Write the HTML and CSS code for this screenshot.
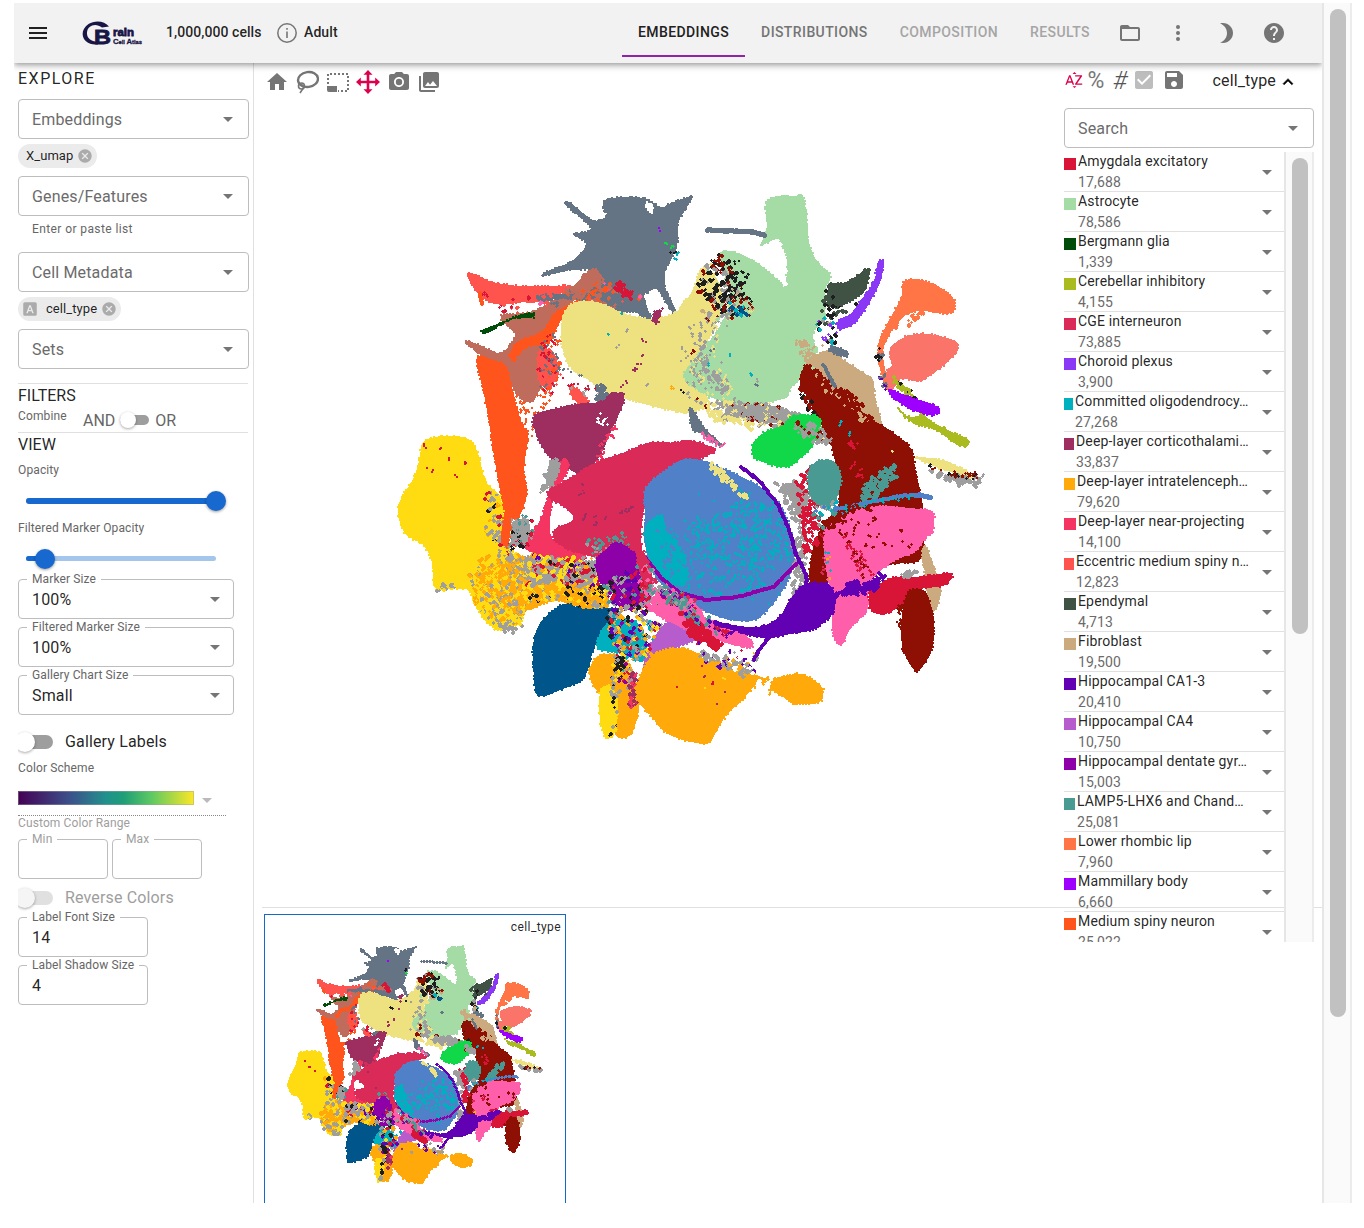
FILE: index.html
```html
<!DOCTYPE html>
<html lang="en">
<head>
<meta charset="utf-8">
<title>Brain Cell Atlas</title>
<link rel="stylesheet" href="styles.css">
</head>
<body>
<div class="app">
  <div class="page">
    <header class="topbar">
      <svg class="icon menu" viewBox="0 0 24 24"><path d="M3 18h18v-2H3v2zm0-5h18v-2H3v2zm0-7v2h18V6H3z"/></svg>
      <svg class="logo" viewBox="0 0 62 26" role="img" aria-label="Brain Cell Atlas">
        <path d="M27 6.500C23 1 13 -.3 6.500 4C-1.500 9.500 -1 19 6 22.800C9 24.300 12 24.500 16 24.500L16 21.800C9 22 4.500 18 5 12.500C5.500 5 14 2.500 20 7.500Z"/>
        <text class="logo-b" x="12" y="24.300" textLength="17" lengthAdjust="spacingAndGlyphs">B</text>
        <text class="logo-rain" x="31" y="15.800" textLength="21" lengthAdjust="spacingAndGlyphs">rain</text>
        <text class="logo-sub" x="31" y="23.800" textLength="29" lengthAdjust="spacingAndGlyphs"><tspan class="cap1">C</tspan>ell <tspan class="cap1">A</tspan>tlas</text>
      </svg>
      <div class="cells">1,000,000 cells</div>
      <svg class="icon info" viewBox="0 0 24 24"><circle cx="12" cy="12" r="9.200" fill="none" stroke="currentColor" stroke-width="1.500"/><path d="M11.200 7h1.600v1.800h-1.600zm0 3.600h1.600V17h-1.600z"/></svg>
      <div class="adult">Adult</div>
      <nav class="tabs">
        <a class="tab active">EMBEDDINGS</a><a class="tab">DISTRIBUTIONS</a><a class="tab off">COMPOSITION</a><a class="tab off">RESULTS</a>
      </nav>
      <div class="actions">
        <svg class="icon" viewBox="0 0 24 24"><path d="M20 6h-8l-2-2H4c-1.100 0-1.990.9-1.990 2L2 18c0 1.100.9 2 2 2h16c1.100 0 2-.9 2-2V8c0-1.100-.9-2-2-2zm0 12H4V8h16v10z"/></svg>
        <svg class="icon" viewBox="0 0 24 24"><circle cx="12" cy="6" r="2"/><circle cx="12" cy="12" r="2"/><circle cx="12" cy="18" r="2"/></svg>
        <svg class="icon" viewBox="0 0 24 24"><path d="M9 2c-1.050 0-2.050.16-3 .46 4.060 1.270 7 5.060 7 9.540 0 4.480-2.940 8.270-7 9.540.95.3 1.950.46 3 .46 5.520 0 10-4.480 10-10S14.520 2 9 2z"/></svg>
        <svg class="icon" viewBox="0 0 24 24"><path d="M12 2C6.480 2 2 6.480 2 12s4.480 10 10 10 10-4.480 10-10S17.520 2 12 2zm1 17h-2v-2h2v2zm2.070-7.750l-.9.920C13.450 12.900 13 13.500 13 15h-2v-.5c0-1.100.45-2.100 1.170-2.830l1.240-1.260c.37-.36.59-.86.59-1.410 0-1.100-.9-2-2-2s-2 .9-2 2H8c0-2.210 1.790-4 4-4s4 1.790 4 4c0 .88-.36 1.680-.93 2.250z"/></svg>
      </div>
    </header>
    <div class="content">
      <aside class="sidebar">
        <h2 class="explore">EXPLORE</h2>
        <div class="field">Embeddings<i class="arrow"></i></div>
        <div class="chips"><span class="chip">X_umap<svg class="x" viewBox="0 0 24 24"><path d="M12 2C6.470 2 2 6.470 2 12s4.470 10 10 10 10-4.470 10-10S17.530 2 12 2zm5 13.590L15.590 17 12 13.410 8.410 17 7 15.590 10.590 12 7 8.410 8.410 7 12 10.590 15.590 7 17 8.410 13.410 12 17 15.590z"/></svg></span></div>
        <div class="field">Genes/Features<i class="arrow"></i></div>
        <div class="helper">Enter or paste list</div>
        <div class="field">Cell Metadata<i class="arrow"></i></div>
        <div class="chips"><span class="chip"><svg class="a" viewBox="0 0 24 24"><path fill-rule="evenodd" d="M5 3h14a2 2 0 0 1 2 2v14a2 2 0 0 1-2 2H5a2 2 0 0 1-2-2V5a2 2 0 0 1 2-2zm6 4L7 17.500h2l.9-2.500h4.200l.9 2.500h2L13 7zm1 2l1.500 4.400h-3z"/></svg>cell_type<svg class="x" viewBox="0 0 24 24"><path d="M12 2C6.470 2 2 6.470 2 12s4.470 10 10 10 10-4.470 10-10S17.530 2 12 2zm5 13.590L15.590 17 12 13.410 8.410 17 7 15.590 10.590 12 7 8.410 8.410 7 12 10.590 15.590 7 17 8.410 13.410 12 17 15.590z"/></svg></span></div>
        <div class="field">Sets<i class="arrow"></i></div>
        <section class="filters">
          <h2>FILTERS</h2>
          <div class="combine"><span class="cap">Combine</span><span class="and">AND</span><span class="switch small"></span><span class="or">OR</span></div>
        </section>
        <section class="view">
          <h2>VIEW</h2>
          <div class="cap opacity">Opacity</div>
          <div class="slider first"><div class="rail"><div class="fill" style="width:100%"><b></b></div></div></div>
          <div class="cap marker">Filtered Marker Opacity</div>
          <div class="slider second"><div class="rail"><div class="fill" style="width:10%"><b></b></div></div></div>
          <fieldset class="box wide"><legend>Marker Size</legend>100%<i class="arrow"></i></fieldset>
          <fieldset class="box wide"><legend>Filtered Marker Size</legend>100%<i class="arrow"></i></fieldset>
          <fieldset class="box wide last"><legend>Gallery Chart Size</legend>Small<i class="arrow"></i></fieldset>
          <div class="toggle labels"><span class="switch"></span>Gallery Labels</div>
          <div class="cap scheme">Color Scheme</div>
          <div class="gradient-row"><div class="gradient"></div><i class="arrow"></i></div>
          <div class="cap range">Custom Color Range</div>
          <div class="minmax"><fieldset class="box dim"><legend>Min</legend></fieldset><fieldset class="box dim"><legend>Max</legend></fieldset></div>
          <div class="toggle reverse"><span class="switch disabled"></span>Reverse Colors</div>
          <fieldset class="box narrow"><legend>Label Font Size</legend>14</fieldset>
          <fieldset class="box narrow"><legend>Label Shadow Size</legend>4</fieldset>
        </section>
      </aside>
      <main class="main">
        <section class="chart">
          <div class="tools">
            <svg class="icon" viewBox="0 0 24 24"><path d="M10 20v-6h4v6h5v-8h3L12 3 2 12h3v8z"/></svg>
            <svg class="icon" viewBox="0 0 24 24"><g fill="none" stroke="currentColor"><ellipse cx="13" cy="9.500" rx="10" ry="7.500" stroke-width="2.400" transform="rotate(-8 13 9.500)"/><circle cx="6.500" cy="16" r="3" stroke-width="1.600"/><path d="M4 14c4 0 6 3 3 6l-2 3" stroke-width="1.600"/></g></svg>
            <svg class="icon" viewBox="0 0 24 24"><path d="M1 16h10v6H3a2 2 0 0 1-2-2z"/><path d="M2 14V4h20v17H12" fill="none" stroke="currentColor" stroke-width="2" stroke-dasharray="2 2"/></svg>
            <svg class="icon move" viewBox="0 0 24 24"><path d="M12 0l4.500 4.800h-3.200v5.900h5.900V7.500L24 12l-4.800 4.500v-3.200h-5.900v5.900h3.200L12 24l-4.500-4.800h3.200v-5.900H4.800v3.200L0 12l4.800-4.500v3.200h5.900V4.800H7.500z"/></svg>
            <svg class="icon" viewBox="0 0 24 24"><circle cx="12" cy="12" r="3.200"/><path d="M9 2L7.170 4H4c-1.100 0-2 .9-2 2v12c0 1.100.9 2 2 2h16c1.100 0 2-.9 2-2V6c0-1.100-.9-2-2-2h-3.170L15 2H9zm3 15c-2.760 0-5-2.240-5-5s2.240-5 5-5 5 2.240 5 5-2.240 5-5 5z"/></svg>
            <svg class="icon" viewBox="0 0 24 24"><path d="M22 16V4c0-1.100-.9-2-2-2H8c-1.100 0-2 .9-2 2v12c0 1.100.9 2 2 2h12c1.100 0 2-.9 2-2zm-11-4l2.030 2.710L16 11l4 5H8l3-4zM2 6v14c0 1.100.9 2 2 2h14v-2H4V6H2z"/></svg>
          </div>
          <canvas id="embedding" class="plot" width="640" height="600"></canvas>
        </section>
        <section class="gallery">
          <div class="tile"><span class="tile-title">cell_type</span><canvas id="thumb" class="thumb" width="300" height="268"></canvas></div>
        </section>
        <aside class="legend-panel">
          <div class="legend-tools">
            <svg class="az" viewBox="0 0 24 24"><path d="M14.940 4.660h-4.720l2.360-2.360zm-4.690 14.710h4.660l-2.330 2.330zM6.100 6.270L1.600 17.730h1.840l.92-2.450h5.110l.92 2.450h1.840L7.740 6.270H6.100zm-1.130 7.370l1.940-5.180 1.940 5.180H4.970zm10.760 2.500h6.120v1.590h-8.530v-1.290l5.920-8.560h-5.880v-1.600h8.300v1.260l-5.930 8.600z"/></svg>
            <span class="glyph pct">%</span><span class="glyph hash">#</span>
            <svg class="icon check" viewBox="0 0 24 24"><path d="M19 3H5c-1.110 0-2 .9-2 2v14c0 1.100.89 2 2 2h14c1.110 0 2-.9 2-2V5c0-1.100-.89-2-2-2zm-9 14l-5-5 1.410-1.410L10 14.170l7.590-7.590L19 8l-9 9z"/></svg>
            <svg class="icon save" viewBox="0 0 24 24"><path d="M17 3H5c-1.110 0-2 .9-2 2v14c0 1.100.89 2 2 2h14c1.100 0 2-.9 2-2V7l-4-4zm-5 16c-1.660 0-3-1.340-3-3s1.340-3 3-3 3 1.340 3 3-1.340 3-3 3zm3-10H5V5h10v4z"/></svg>
            <span class="legend-name">cell_type</span>
            <svg class="up" viewBox="0 0 24 24"><path d="M12 8l-6 6 1.410 1.410L12 10.830l4.590 4.580L18 14z" stroke="currentColor" stroke-width=".8"/></svg>
          </div>
          <div class="field search">Search<i class="arrow"></i></div>
          <div class="list-wrap">
            <ul class="list">
              <li><i class="sw" style="background:#d81437"></i><p>Amygdala excitatory<small>17,688</small></p><i class="arrow"></i></li>
              <li><i class="sw" style="background:#a5dca5"></i><p>Astrocyte<small>78,586</small></p><i class="arrow"></i></li>
              <li><i class="sw" style="background:#004d0a"></i><p>Bergmann glia<small>1,339</small></p><i class="arrow"></i></li>
              <li><i class="sw" style="background:#aabb20"></i><p>Cerebellar inhibitory<small>4,155</small></p><i class="arrow"></i></li>
              <li><i class="sw" style="background:#da2a58"></i><p>CGE interneuron<small>73,885</small></p><i class="arrow"></i></li>
              <li><i class="sw" style="background:#8a38f5"></i><p>Choroid plexus<small>3,900</small></p><i class="arrow"></i></li>
              <li><i class="sw" style="background:#00b0bf;width:9px"></i><p>Committed oligodendrocy…<small>27,268</small></p><i class="arrow"></i></li>
              <li><i class="sw" style="background:#9e2d60;width:10px"></i><p>Deep-layer corticothalami…<small>33,837</small></p><i class="arrow"></i></li>
              <li><i class="sw" style="background:#ffa90a;width:11px"></i><p>Deep-layer intratelenceph…<small>79,620</small></p><i class="arrow"></i></li>
              <li><i class="sw" style="background:#f53561"></i><p>Deep-layer near-projecting<small>14,100</small></p><i class="arrow"></i></li>
              <li><i class="sw" style="background:#ff544d;width:10px"></i><p>Eccentric medium spiny n…<small>12,823</small></p><i class="arrow"></i></li>
              <li><i class="sw" style="background:#3f5243"></i><p>Ependymal<small>4,713</small></p><i class="arrow"></i></li>
              <li><i class="sw" style="background:#ccaa80"></i><p>Fibroblast<small>19,500</small></p><i class="arrow"></i></li>
              <li><i class="sw" style="background:#6200b3"></i><p>Hippocampal CA1-3<small>20,410</small></p><i class="arrow"></i></li>
              <li><i class="sw" style="background:#b75ccc"></i><p>Hippocampal CA4<small>10,750</small></p><i class="arrow"></i></li>
              <li><i class="sw" style="background:#8e00a8"></i><p>Hippocampal dentate gyr…<small>15,003</small></p><i class="arrow"></i></li>
              <li><i class="sw" style="background:#489a92;width:11px"></i><p>LAMP5-LHX6 and Chand…<small>25,081</small></p><i class="arrow"></i></li>
              <li><i class="sw" style="background:#ff7546"></i><p>Lower rhombic lip<small>7,960</small></p><i class="arrow"></i></li>
              <li><i class="sw" style="background:#9e00ff"></i><p>Mammillary body<small>6,660</small></p><i class="arrow"></i></li>
              <li><i class="sw" style="background:#ff541c"></i><p>Medium spiny neuron<small>25,022</small></p><i class="arrow"></i></li>
            </ul>
            <div class="track"><div class="thumb-bar list-thumb"></div></div>
          </div>
        </aside>
      </main>
    </div>
  </div>
  <div class="track page-track"><div class="thumb-bar page-thumb"></div></div>
</div>
<script src="plot.js"></script>
</body>
</html>
```
FILE: styles.css
```css
* { box-sizing: border-box; }
body { margin: 0; background: #fff; color: rgba(0,0,0,.87); font: 16px/1.2 Roboto, "Liberation Sans", sans-serif; overflow: hidden; }
h2, p, ul { margin: 0; padding: 0; font-weight: 400; font-size: 16px; }
.app { display: flex; width: 1338px; height: 1200px; margin: 3px 0 0 14px; overflow: hidden; }
.page { width: 1308px; display: flex; flex-direction: column; }
.icon { width: 24px; height: 24px; fill: currentColor; color: #757575; flex: none; }
.arrow { width: 0; height: 0; border: 5px solid transparent; border-top-color: #757575; border-bottom: 0; flex: none; }

.topbar { height: 60px; flex: none; display: flex; align-items: center; background: #f2f2f2; position: relative; z-index: 2; box-shadow: 0 2px 4px -1px rgba(0,0,0,.2), 0 4px 5px rgba(0,0,0,.14), 0 1px 10px rgba(0,0,0,.12); font-size: 14px; font-weight: 500; clip-path: inset(0 0 -14px 0); }
.menu { margin-left: 12px; color: #212121; }
.logo { width: 62px; height: 26px; margin: 0 0 0 32px; fill: #191645; flex: none; }
.logo text { font-family: "Liberation Sans", sans-serif; font-weight: 700; stroke: #191645; stroke-width: .8; }
.logo-b { font-size: 20px; }
.logo-rain { font-size: 11px; }
.logo .logo-sub { font-size: 6px; stroke-width: .3; }
.cap1 { font-size: 8px; }
.cells { margin-left: 22px; width: 96px; padding-bottom: 2px; white-space: nowrap; letter-spacing: .06px; }
.info { margin-left: 13px; }
.adult { margin-left: 5px; width: 34px; padding-bottom: 2px; letter-spacing: .1px; }
.tabs { display: flex; height: 60px; margin-left: 284px; }
.tab { padding: 0 16px; height: 54px; line-height: 59px; color: #757575; letter-spacing: .4px; white-space: nowrap; }
.tab.active { color: #212121; border-bottom: 2px solid #8e24aa; }
.tab.off { color: #a5a5a5; }
.actions { display: flex; gap: 24px; margin-left: 12px; }

.content { display: flex; flex: 1; min-height: 0; }
.sidebar { width: 240px; border-right: 1px solid #e0e0e0; padding-left: 4px; flex: none; }
.sidebar h2 { line-height: 24px; height: 23px; }
.sidebar .explore { height: 36px; line-height: 31px; letter-spacing: 1.5px; }
.field { width: 231px; height: 40px; border: 1px solid #bdbdbd; border-radius: 4px; display: flex; align-items: center; justify-content: space-between; padding: 1px 15px 0 13px; color: #6b6b6b; letter-spacing: .16px; line-height: 20px; }
.field .arrow, .wide .arrow { margin-top: -1px; }
.chips { height: 37px; padding-top: 5px; }
.chip { display: inline-flex; align-items: center; height: 24px; border-radius: 12px; background: #ebebeb; padding: 0 4px 0 8px; font-size: 13px; letter-spacing: .07px; vertical-align: top; }
.chip svg { fill: #ababab; }
.x { width: 16px; height: 16px; margin-left: 4px; }
.a { width: 18px; height: 18px; margin: 0 7px 0 -5px; }
.helper { height: 36px; line-height: 26px; padding-left: 14px; font-size: 12px; letter-spacing: .4px; color: #666; }
.filters { margin: 14px 5px 0 0; border: solid #e0e0e0; border-width: 1px 0; height: 50px; }
.cap { font-size: 12px; letter-spacing: .12px; color: #666; }
.combine { display: flex; color: #666; height: 25px; line-height: 27px; }
.combine .cap { width: 65px; line-height: 18px; }
.combine .switch { margin: 6px 6px 0 5px; }
.switch { width: 34px; height: 14px; border-radius: 7px; background: #9e9e9e; position: relative; display: block; flex: none; }
.switch::before { content: ""; position: absolute; width: 20px; height: 20px; border-radius: 50%; background: #fff; left: -3px; top: -3px; box-shadow: 0 1px 3px rgba(0,0,0,.35); }
.switch.small { width: 29px; height: 10px; top: 2px; }
.switch.small::before { width: 16px; height: 16px; left: 0; top: -3px; }
.switch.disabled { background: #e0e0e0; }
.switch.disabled::before { background: #f5f5f5; }
.opacity { height: 28px; line-height: 28px; }
.marker { height: 20px; line-height: 20px; }
.slider { padding-left: 8px; }
.first { height: 34px; padding-top: 14px; }
.second { height: 41px; padding-top: 18px; }
.rail { width: 190px; height: 5px; border-radius: 3px; background: #a5c6ec; }
.fill { height: 6px; border-radius: 3px; background: #1769cf; position: relative; }
.second .fill { height: 5px; }
.fill b { position: absolute; right: -10px; top: -7px; width: 20px; height: 20px; border-radius: 50%; background: #1769cf; box-shadow: 0 1px 3px rgba(0,0,0,.4); }
.box { position: relative; margin: 0 0 8px; height: 40px; border: 1px solid #bdbdbd; border-radius: 4px; padding: 1px 13px 0; display: flex; justify-content: space-between; align-items: center; letter-spacing: .15px; min-width: 0; line-height: 20px; }
.box legend { position: absolute; left: 8px; top: -8px; padding: 0 5px; font-size: 12px; line-height: 14px; letter-spacing: .12px; color: #666; background: #fff; white-space: nowrap; }
.wide { width: 216px; }
.last { margin: 0; }
.narrow { width: 130px; }
.toggle { display: flex; align-items: center; gap: 12px; letter-spacing: .15px; height: 38px; overflow: hidden; }
.toggle .switch { width: 35px; }
.labels { margin-top: 6px; height: 42px; }
.reverse { color: #9e9e9e; }
.scheme { height: 28px; line-height: 10px; }
.gradient-row { display: flex; align-items: flex-start; width: 208px; height: 25px; border-bottom: 1px dotted #888; }
.gradient { width: 176px; height: 14px; border: 1px solid rgba(160,160,160,.45); background: linear-gradient(90deg,#440154,#3b528b 30%,#21918c 50%,#1f9e78 60%,#5ec962 76%,#fde725) border-box; }
.gradient-row .arrow { margin: 7px 0 0 8px; opacity: .5; }
.range { height: 23px; line-height: 15px; color: #9e9e9e; }
.minmax { display: flex; gap: 4px; height: 40px; }
.dim { width: 90px; }
.dim legend { color: #9e9e9e; }

.main { flex: 1; position: relative; display: flex; flex-direction: column; min-width: 0; }
.chart { height: 844px; flex: none; padding: 7px 0 0 11px; }
.tools { display: flex; gap: 6.400px; height: 24px; }
.tools .move { color: #dc004e; }
.plot { display: block; margin: 82px 0 0 115px; }
.gallery { border-top: 1px solid #e0e0e0; margin-left: 8px; padding: 6px 0 0 2px; flex: 1; min-height: 0; }
.tile { width: 302px; height: 310px; border: 1px solid #1769c6; display: flex; flex-direction: column; }
.tile-title { align-self: flex-end; font-size: 12px; line-height: 14px; padding: 5px 4px 0 0; letter-spacing: .4px; }
.thumb { display: block; }

.legend-panel { position: absolute; left: 810px; top: 0; width: 250px; }
.legend-tools { display: flex; height: 45px; padding-top: 5px; }
.az { width: 20px; height: 20px; margin-top: 2px; fill: #dc004e; flex: none; }
.glyph { width: 24px; font-size: 23px; line-height: 25px; font-weight: 400; color: #777; text-align: center; flex: none; }
.glyph.hash { font-size: 25px; font-weight: 300; font-style: italic; color: #555; }
.check { color: #bdbdbd; }
.save { margin-left: 6px; }
.legend-name { margin-left: 26.500px; line-height: 26px; letter-spacing: .15px; width: 65.500px; }
.up { width: 20px; height: 26px; color: #212121; padding-top: 2px; }
.search { width: 250px; }
.list-wrap { display: flex; height: 790px; margin-top: 4px; overflow: hidden; }
.list { width: 220px; list-style: none; }
.list li { display: flex; height: 40px; border-bottom: 1px solid #e0e0e0; }
.sw { width: 12px; height: 12px; margin: 6px 2px 0 0; flex: none; }
.list p { flex: 1; font-size: 14px; line-height: 19px; letter-spacing: .16px; white-space: nowrap; }
.list small { display: block; font-size: 14px; line-height: 23px; color: #6b6b6b; }
.list .arrow { margin: 18px 12px 0 0; }
.track { width: 30px; background: #fafafa; border-left: 2px solid #e6e6e6; border-right: 2px solid #ececec; flex: none; padding: 6px 0 0 6px; }
.thumb-bar { width: 16px; border-radius: 8px; background: #c1c1c1; }
.list-thumb { height: 476px; }
.page-thumb { height: 1008px; }
```
FILE: plot.js
```js
// UMAP scatter: solid cluster outlines, thin trajectories and mixed-cell regions.
const C = {
  slate: '#647485', coral: '#ff544d', brown: '#c06c5c', msn: '#ff541c', berg: '#004d0a',
  khaki: '#eee180', astro: '#a5dca5', epen: '#3f5243', chor: '#8a38f5', rhomb: '#ff7546',
  salmon: '#fa7469', mam: '#9e00ff', olive: '#aabb20', tan: '#ccaa80', dred: '#8e1005',
  crim: '#d81437', pink: '#ff5eaa', ca1: '#6200b3', dg: '#8e00a8', green: '#10d848',
  ct: '#9e2d60', cge: '#da2a58', near: '#f53561', blue: '#5080c8', cop: '#00b0bf',
  navy: '#00568a', yel: '#ffdb12', it: '#ffa90a', ca4: '#b75ccc', lamp: '#489a92',
  gray: '#9e9e9e', black: '#1e1e1e', white: '#ffffff'
};

// ['p', colour, outline] polygon; ['l', colour, width, line] trajectory;
// ['s', colours, count, size, outline] scattered markers inside an outline.
const LAYERS = [
  ['p', 'slate', '565,202 570,202 592,221 602,220 608,215 603,210 602,201 610,198 623,197 633,197 647,198 657,206 662,208 670,203 695,194 683,213 677,222 678,243 670,262 665,270 664,285 668,295 678,314 672,314 657,287 648,292 642,295 652,320 647,321 637,312 623,312 610,318 607,307 600,297 583,300 563,297 537,302 535,295 567,295 590,280 593,269 567,270 541,277 541,274 557,267 570,263 585,248 587,242 577,237 573,233 587,232 592,227 567,207'],
  ['p', 'white', '645,201 654,206 652,214 646,208'],
  ['p', 'coral', '466,274 473,273 490,282 523,287 570,285 570,290 537,303 523,302 500,305 490,303 477,294 469,281'],
  ['s', 'coral coral coral crim', 60, 4, '480,294 545,298 555,316 500,316'],
  ['l', 'msn', 3, '479,293 482,305'],
  ['p', 'brown', '498,314 533,313 570,290 592,266 604,277 590,290 563,307 550,337 540,353 540,387 533,401 523,402 512,388 503,367 480,355 464,341 470,342 500,356 518,335 505,325'],
  ['p', 'msn', '474,356 486,356 507,366 512,390 518,413 523,427 529,433 523,470 528,493 519,519 504,519 498,480 493,453 490,430 484,395'],
  ['p', 'brown', '464,342 470,341 502,355 510,362 485,358'],
  ['p', 'msn', '507,357 517,340 543,333 553,313 577,300 597,287 603,293 577,307 560,320 553,337 547,345 525,350 520,365'],
  ['s', 'msn', 190, 3, '515,385 540,340 560,340 550,400 535,440 523,430'],
  ['p', 'brown', '513,365 522,350 542,343 541,387 533,402 523,402 512,388'],
  ['p', 'coral', '537,348 554,350 559,372 550,391 537,382'],
  ['s', 'msn coral slate crim', 170, 3, '540,340 556,330 563,370 552,395 540,390'],
  ['p', 'slate', '535,295 570,294 605,293 640,297 640,306 608,302 585,300 560,298 537,302'],
  ['s', 'slate brown slate pink msn coral msn brown slate brown', 130, 4, '535,298 570,290 600,280 645,297 610,310 575,300 545,310'],
  ['s', 'brown', 60, 4, '565,295 590,270 604,278 600,290 575,298'],
  ['s', 'crim', 50, 4, '612,282 620,282 633,295 630,299 613,290'],
  ['p', 'berg', '480,330 503,322 523,313 535,313 534,318 513,318 490,331 483,334'],
  ['p', 'coral', '569,385 580,390 592,406 584,407 571,398'],
  ['p', 'khaki', '583,301 569,304 561,317 561,347 569,368 590,381 607,394 623,398 643,404 690,415 710,402 700,380 690,370 717,323 723,297 717,277 701,264 692,293 680,305 677,313 650,320 623,314 607,305 593,301'],
  ['s', 'slate gray crim', 45, 3, '550,360 570,370 610,390 610,400 585,400 555,375'],
  ['s', 'slate', 90, 4, '596,388 607,387 609,412 598,405'],
  ['p', 'astro', '766,200 780,195 797,196 803,194 807,217 808,243 817,263 832,274 823,293 825,320 813,330 813,340 818,353 803,377 790,388 788,398 760,404 730,404 700,394 681,377 692,360 713,337 725,317 733,300 725,280 718,251 734,251 757,262 778,280 785,290 788,257 777,237 758,248 767,230 765,210'],
  ['s', 'white', 35, 4, '768,242 784,240 786,285 776,272'],
  ['s', 'khaki gray khaki', 210, 3, '692,315 720,320 715,350 735,385 737,403 695,393 686,370'],
  ['s', 'gray khaki astro tan dred', 110, 4, '700,265 722,255 755,310 730,325 695,318'],
  ['s', 'black black black gray dred', 230, 4, '700,268 722,252 740,275 742,315 718,315 698,290'],
  ['s', 'black', 42, 3, '730,255 745,265 758,310 740,320 728,280'],
  ['s', 'tan dred', 25, 3, '730,280 755,290 755,318 730,310'],
  ['s', 'navy navy cop', 30, 4, '728,302 738,304 751,317 737,317'],
  ['s', 'gray gray khaki dred', 60, 3, '680,330 700,320 710,400 680,400'],
  ['s', 'gray', 55, 4, '697,330 704,330 707,362 728,390 722,397 701,370'],
  ['s', 'cop slate black gray it', 32, 3, '570,315 800,300 790,395 660,400'],
  ['s', 'ct', 60, 3, '653,312 660,309 658,323 654,323'],
  ['l', 'slate', 4, '707,230 730,231 754,232 766,236'],
  ['p', 'gray', '722,401 745,408 775,405 800,416 812,426 790,424 755,422 730,416'],
  ['s', 'gray gray gray gray khaki khaki gray dred', 480, 4, '690,396 730,402 765,403 790,410 835,430 828,443 800,432 770,425 730,422 700,405'],
  ['s', 'khaki', 100, 4, '690,402 730,416 768,423 755,430 715,420'],
  ['s', 'gray', 110, 4, '732,405 775,407 792,420 760,422 735,416'],
  ['p', 'slate', '688,405 694,411 703,428 724,446 720,448 702,433 691,431'],
  ['s', 'pink', 30, 3, '700,430 724,447 720,450 698,434'],
  ['p', 'epen', '828,283 847,283 869,266 870,272 865,293 847,303 836,309 826,305'],
  ['s', 'epen epen black', 60, 4, '822,285 830,280 840,310 850,310 862,293 858,315 835,315 825,330 820,300'],
  ['p', 'chor', '877,260 885,260 880,283 867,307 853,326 837,331 836,321 850,315 863,297 875,280'],
  ['s', 'black black tan cop gray chor', 50, 4, '815,323 830,315 840,340 822,350'],
  ['p', 'rhomb', '901,282 915,278 935,284 955,298 954,314 933,313 923,310 907,313 893,327 883,347 882,360 888,380 891,392 885,388 879,367 877,343 887,323 902,297'],
  ['s', 'rhomb', 28, 4, '895,325 908,312 930,313 910,327 890,337'],
  ['s', 'black slate', 14, 4, '873,342 879,345 887,388 881,384'],
  ['p', 'salmon', '890,346 907,335 927,333 959,341 956,354 937,371 918,383 900,377 891,393 884,373 893,365 889,353'],
  ['s', 'olive olive olive black', 60, 4, '893,376 900,383 917,399 910,398 897,387'],
  ['p', 'olive', '895,406 907,417 920,417 920,409 928,420 947,430 969,439 968,447 957,446 937,430 910,423'],
  ['p', 'mam', '886,388 913,398 938,406 940,413 930,416 910,410 891,397'],
  ['s', 'ca1 slate', 15, 3, '877,375 883,381 890,392 885,390'],
  ['p', 'tan', '813,357 827,349 853,366 874,380 874,397 884,430 860,413 837,393 820,377 808,367 797,342 807,340'],
  ['p', 'dred', '801,368 817,367 830,387 853,397 863,415 887,428 912,447 915,470 920,490 923,510 925,540 920,563 893,563 827,583 807,585 812,547 823,523 840,507 837,473 832,447 823,427 812,407 799,383'],
  ['s', 'dred dred tan', 170, 4, '805,362 825,380 860,397 878,426 855,415 820,388'],
  ['s', 'tan astro', 50, 3, '793,340 820,345 815,370 800,360'],
  ['s', 'black dred', 45, 4, '797,385 806,390 820,420 808,410'],
  ['p', 'slate', '827,350 833,345 848,352 847,358 835,354'],
  ['l', 'slate', 3, '823,365 830,378 835,387'],
  ['s', 'crim', 34, 3, '843,442 858,440 860,475 850,475'],
  ['s', 'yel khaki cop', 10, 3, '820,400 850,430 900,455 840,450'],
  ['p', 'khaki', '911,456 940,459 960,467 978,478 965,477 935,467'],
  ['s', 'gray', 110, 4, '930,471 950,476 981,477 982,484 960,483 940,478'],
  ['s', 'dred black dred', 50, 3, '925,464 950,473 978,472 980,479 960,479 940,475'],
  ['p', 'green', '751,443 765,431 783,426 793,414 819,415 821,427 813,447 788,469 767,464 752,458'],
  ['s', 'gray dred gray gray', 100, 4, '790,420 820,427 833,440 828,446 800,433'],
  ['p', 'ct', '531,415 553,409 577,404 603,402 610,392 624,393 624,403 610,433 600,457 582,477 567,468 547,456 536,437'],
  ['s', 'white ct', 30, 3, '596,415 611,407 607,427 598,423'],
  ['s', 'near', 50, 3, '610,427 616,425 597,468 590,466'],
  ['p', 'near', '547,497 563,455 571,465 552,498 548,537 563,547 590,557 570,564 537,555 521,547 523,537 540,523'],
  ['p', 'cge', '545,492 573,476 597,461 623,453 650,441 673,443 690,439 720,450 700,459 680,467 650,487 643,510 640,540 647,575 625,552 600,559 570,551 553,541 553,528 577,520 562,505 550,500'],
  ['s', 'ct cge', 50, 2, '575,465 583,465 585,510 580,520 650,500 590,530'],
  ['s', 'lamp', 40, 4, '585,540 622,532 627,546 595,552'],
  ['p', 'gray', '549,460 558,460 559,474 550,487 546,480'],
  ['s', 'gray', 60, 4, '548,461 558,461 560,478 545,495 540,490'],
  ['p', 'blue', '643,489 660,474 680,459 700,459 730,471 760,486 781,504 791,530 795,560 786,586 771,606 757,621 730,621 705,612 680,599 653,577 643,540 645,510'],
  ['p', 'cop', '643,525 662,512 666,530 685,550 688,588 668,583 647,557'],
  ['s', 'cop', 520, 3, '650,530 680,518 700,515 740,500 780,510 792,560 770,585 700,600 655,580'],
  ['s', 'cop', 330, 3, '690,530 750,495 785,520 790,555 740,570 710,560'],
  ['s', 'blue', 330, 3, '655,530 705,515 780,530 780,570 700,590 665,578'],
  ['s', 'cop', 60, 3, '685,480 780,500 785,600 750,615 690,598'],
  ['s', 'khaki', 75, 4, '706,463 720,467 750,500 735,495'],
  ['p', 'gray', '778,484 800,482 808,495 806,520 797,515 790,498'],
  ['s', 'gray', 300, 4, '775,485 795,480 808,495 806,540 802,585 791,600 797,525'],
  ['s', 'crim', 200, 4, '793,478 813,466 816,500 822,540 804,555 802,520'],
  ['p', 'lamp', '808,467 820,459 836,461 842,480 836,501 827,510 812,501 807,487'],
  ['s', 'lamp', 200, 4, '863,490 877,473 897,463 895,477 873,500 857,510'],
  ['s', 'lamp cop gray blue', 55, 4, '813,505 832,503 845,515 825,532 815,525'],
  ['l', 'blue', 3, '835,510 865,503 900,496 915,495'],
  ['s', 'cop', 30, 3, '845,506 912,493 912,498 845,510'],
  ['l', 'blue', 4, '915,495 921,495 931,498'],
  ['p', 'pink', '825,526 853,511 880,505 920,509 934,511 934,531 925,538 917,551 893,561 877,573 867,587 869,611 850,627 842,647 832,638 832,603 824,560 824,537'],
  ['s', 'dred', 48, 3, '827,525 860,510 890,510 870,530 920,525 920,550 850,550'],
  ['s', 'dred', 40, 4, '822,522 850,506 885,505 850,514 827,530'],
  ['s', 'crim crim dred', 75, 3, '843,525 855,550 880,575 862,577 845,545'],
  ['s', 'cop it pink cge', 28, 3, '820,550 830,550 830,582 822,582'],
  ['p', 'tan', '925,543 935,570 942,590 935,614 927,603 925,573 921,556'],
  ['p', 'crim', '868,590 893,576 920,577 951,572 953,578 943,587 920,588 907,603 883,616 869,611'],
  ['s', 'gray', 28, 4, '903,570 915,570 917,575 905,577'],
  ['p', 'dred', '907,589 926,589 934,617 933,651 917,674 909,664 901,647 901,617'],
  ['s', 'dred', 70, 3, '897,605 910,600 905,650 900,640'],
  ['p', 'ca1', '730,628 763,627 780,617 787,603 803,582 830,583 836,597 834,614 813,631 793,633 770,639 740,634'],
  ['s', 'ca1', 200, 4, '833,597 850,583 890,574 880,583 867,593 847,595'],
  ['l', 'ca1', 3, '741,467 760,482 778,505 789,530 796,555 806,575 806,584'],
  ['l', 'dg', 3, '645,557 660,577 680,593 707,600 737,597 773,587 785,575 797,563'],
  ['p', 'yel', '422,440 440,436 460,436 473,441 479,457 485,483 502,497 505,540 515,562 500,592 470,590 455,588 433,591 433,565 425,545 404,535 397,515 399,500 414,478 419,460'],
  ['p', 'yel', '465,575 500,550 530,560 532,585 526,605 521,624 500,631 485,622 472,600'],
  ['p', 'gray', '505,558 530,556 565,562 600,560 607,580 570,588 530,592 510,580'],
  ['p', 'it', '515,588 535,583 565,582 604,590 610,608 590,611 560,600 545,603 528,611 510,612'],
  ['s', 'crim', 16, 2, '419,440 430,445 470,460 460,495 425,470'],
  ['s', 'yel yel yel it gray', 600, 4, '465,570 500,545 530,555 565,560 600,562 608,590 606,608 580,606 560,598 530,605 522,622 500,630 485,622 472,600'],
  ['s', 'it it it yel gray', 480, 4, '470,573 515,555 530,575 525,597 500,612 475,594'],
  ['s', 'it gray yel', 130, 4, '478,595 500,605 525,600 523,615 500,625 485,615'],
  ['s', 'gray gray yel', 60, 4, '475,605 500,625 525,615 523,627 500,633'],
  ['s', 'gray gray yel', 28, 4, '434,583 455,585 448,593 436,593'],
  ['s', 'gray gray gray yel yel black crim it', 200, 4, '483,495 497,490 504,520 520,545 520,568 500,560 485,530'],
  ['p', 'gray', '509,522 528,517 530,532 524,546 512,544'],
  ['s', 'gray gray gray gray black crim lamp', 100, 4, '506,522 532,515 535,530 525,548 506,548'],
  ['p', 'msn', '504,513 512,520 507,550 500,540'],
  ['s', 'gray gray gray gray yel crim', 200, 5, '523,558 550,558 590,565 585,585 530,588'],
  ['s', 'yel gray gray yel gray it black crim near ca1', 200, 4, '530,552 570,560 600,555 608,590 570,590 535,575'],
  ['s', 'it it it yel gray gray it black', 240, 4, '530,587 565,585 605,588 611,608 590,610 560,600 530,602'],
  ['s', 'lamp gray cge', 50, 3, '585,545 625,535 637,550 600,557'],
  ['p', 'dg', '594,560 608,547 618,541 638,555 642,582 617,594 598,582'],
  ['p', 'navy', '565,602 583,610 625,607 603,633 592,650 590,664 583,681 563,689 547,695 535,697 533,670 532,643 540,622 550,612'],
  ['p', 'cop', '593,650 604,622 635,618 648,640 645,665 620,653'],
  ['p', 'dg', '610,592 640,580 652,592 640,612 618,608'],
  ['s', 'dg gray gray black lamp ca1 crim dg', 220, 4, '600,580 640,565 655,590 640,615 610,605'],
  ['p', 'cge', '634,550 645,550 655,590 645,592'],
  ['p', 'pink', '648,598 665,592 700,606 705,620 675,616 655,612'],
  ['s', 'pink crim lamp gray pink cge', 300, 4, '638,575 648,560 655,580 700,600 690,625 645,610'],
  ['s', 'lamp gray dg lamp', 90, 4, '655,585 690,600 695,615 670,610'],
  ['p', 'ca4', '640,683 644,660 652,640 663,624 680,619 706,635 690,643 665,650 650,667 648,682'],
  ['p', 'pink', '643,604 680,606 720,624 754,640 752,650 700,636 660,618'],
  ['s', 'crim', 130, 5, '680,612 700,625 721,644 718,649 690,636'],
  ['s', 'ca1 lamp crim', 80, 4, '675,605 715,622 735,633 720,636 690,620'],
  ['l', 'ca1', 4, '715,623 735,628 760,632'],
  ['p', 'it', '628,700 650,654 673,647 690,649 707,659 750,667 759,680 740,703 727,713 717,730 709,745 690,742 665,734 650,715 635,700'],
  ['p', 'it', '598,654 615,654 633,665 640,710 631,737 614,739 610,700 595,691 587,670'],
  ['s', 'gray gray gray gray gray ca1 it white', 150, 4, '700,650 715,655 750,665 757,650 757,660 752,678 700,662'],
  ['s', 'gray white white ca1 crim', 40, 3, '690,640 720,650 755,650 752,662 700,658'],
  ['l', 'ca1', 3, '768,638 759,650 753,661'],
  ['p', 'it', '773,678 788,675 802,673 824,687 822,703 793,705 783,697 770,690'],
  ['s', 'it', 40, 3, '748,677 790,676 785,694 750,687'],
  ['l', 'it', 2, '745,675 770,680'],
  ['p', 'yel', '599,688 610,684 619,700 615,736 605,740 599,720'],
  ['s', 'gray it cop dg yel gray it ca1 black crim', 330, 4, '605,610 640,605 660,625 645,665 628,660 632,690 618,680 612,640'],
  ['s', 'black', 35, 4, '613,657 624,658 625,670 614,670'],
  ['s', 'black gray yel gray', 60, 4, '609,660 620,655 622,680 615,735 610,735 612,700'],
  ['s', 'ct near', 60, 4, '628,675 635,672 637,702 629,711'],
  ['s', 'crim ct gray yel', 12, 2, '650,660 750,670 710,730'],
  ['s', 'ct', 18, 2, '645,340 655,340 655,350 620,392 618,388 645,348'],
  ['s', 'mam cop rhomb black green', 14, 3, '668,235 678,245 676,260 665,262'],
  ['s', 'mam', 2, 3, '590,222 665,230 664,240 592,227']
];

let seed = 7;
function rnd() {
  seed = (seed * 1664525 + 1013904223) % 4294967296;
  return seed / 4294967296;
}
const parse = s => s.split(' ').map(p => p.split(',').map(Number));
const mix = (a, b, t) => [a[0] + (b[0] - a[0]) * t, a[1] + (b[1] - a[1]) * t];
// Corner cutting rounds an outline without moving its edges.
function smooth(pts) {
  for (let n = 0; n < 2; n++)
    pts = pts.flatMap((p, i) => {
      const q = pts[(i + 1) % pts.length];
      return [mix(p, q, .2), mix(p, q, .8)];
    });
  return pts;
}
function inside(x, y, pts) {
  let hit = false;
  for (let i = 0, j = pts.length - 1; i < pts.length; j = i++) {
    const [ax, ay] = pts[i], [bx, by] = pts[j];
    if ((ay > y) !== (by > y) && x < (bx - ax) * (y - ay) / (by - ay) + ax) hit = !hit;
  }
  return hit;
}

function draw(id, k, ox, oy, density) {
  const ctx = document.getElementById(id).getContext('2d');
  seed = 7;
  const dot = (x, y, s) => {
    const px = Math.round((x - ox) * k - s / 2), py = Math.round((y - oy) * k - s / 2);
    if (s > 2) {
      ctx.fillRect(px + 1, py, s - 2, s);
      ctx.fillRect(px, py + 1, s, s - 2);
    } else ctx.fillRect(px, py, s, s);
  };
  const walk = (a, b, step, fn) => {
    const n = Math.max(1, Math.ceil(Math.hypot(b[0] - a[0], b[1] - a[1]) * k / step));
    for (let i = 0; i < n; i++) fn(a[0] + (b[0] - a[0]) * i / n, a[1] + (b[1] - a[1]) * i / n);
  };
  for (const layer of LAYERS) {
    let pts = parse(layer[layer.length - 1]);
    if (layer[0] === 'p') {
      pts = smooth(pts);
      ctx.fillStyle = C[layer[1]];
      const ys = pts.map(p => (p[1] - oy) * k), xs = pts.map(p => (p[0] - ox) * k);
      for (let y = Math.floor(Math.min(...ys)); y <= Math.max(...ys); y++)
        for (let x = Math.floor(Math.min(...xs)); x <= Math.max(...xs); x++)
          if (inside((x + .5) / k + ox, (y + .5) / k + oy, pts)) ctx.fillRect(x, y, 1, 1);
      pts.forEach((p, i) => walk(p, pts[(i + 1) % pts.length], 4, (x, y) => {
        if (rnd() < .6) dot(x + (rnd() - .5), y + (rnd() - .5), 2);
      }));
    } else if (layer[0] === 'l') {
      ctx.fillStyle = C[layer[1]];
      for (let i = 1; i < pts.length; i++)
        walk(pts[i - 1], pts[i], 1.5, (x, y) => dot(x + (rnd() - .5) * .8, y + (rnd() - .5) * .8, Math.max(3, Math.round(layer[2] * k) + 1)));
    } else {
      const cols = layer[1].split(' ');
      const xs = pts.map(p => p[0]), ys = pts.map(p => p[1]);
      const x0 = Math.min(...xs), y0 = Math.min(...ys), w = Math.max(...xs) - x0, h = Math.max(...ys) - y0;
      let left = Math.ceil(layer[2] * density), tries = 0;
      while (left > 0 && tries++ < 60000) {
        let x = x0 + rnd() * w, y = y0 + rnd() * h;
        if (!inside(x, y, pts)) continue;
        ctx.fillStyle = C[cols[Math.floor(rnd() * cols.length)]];
        const run = 1 + Math.floor(rnd() * 3);
        for (let r = 0; r < run && left > 0; r++) {
          dot(x, y, Math.max(2, layer[3] - (rnd() < .5 ? 1 : 0)));
          x += (rnd() - .5) * 5;
          y += (rnd() - .5) * 5;
          left--;
        }
      }
    }
  }
}
draw('embedding', 1, 379.7, 176, 1);
draw('thumb', 0.433, 344.5, 166.5, 0.3);
```
